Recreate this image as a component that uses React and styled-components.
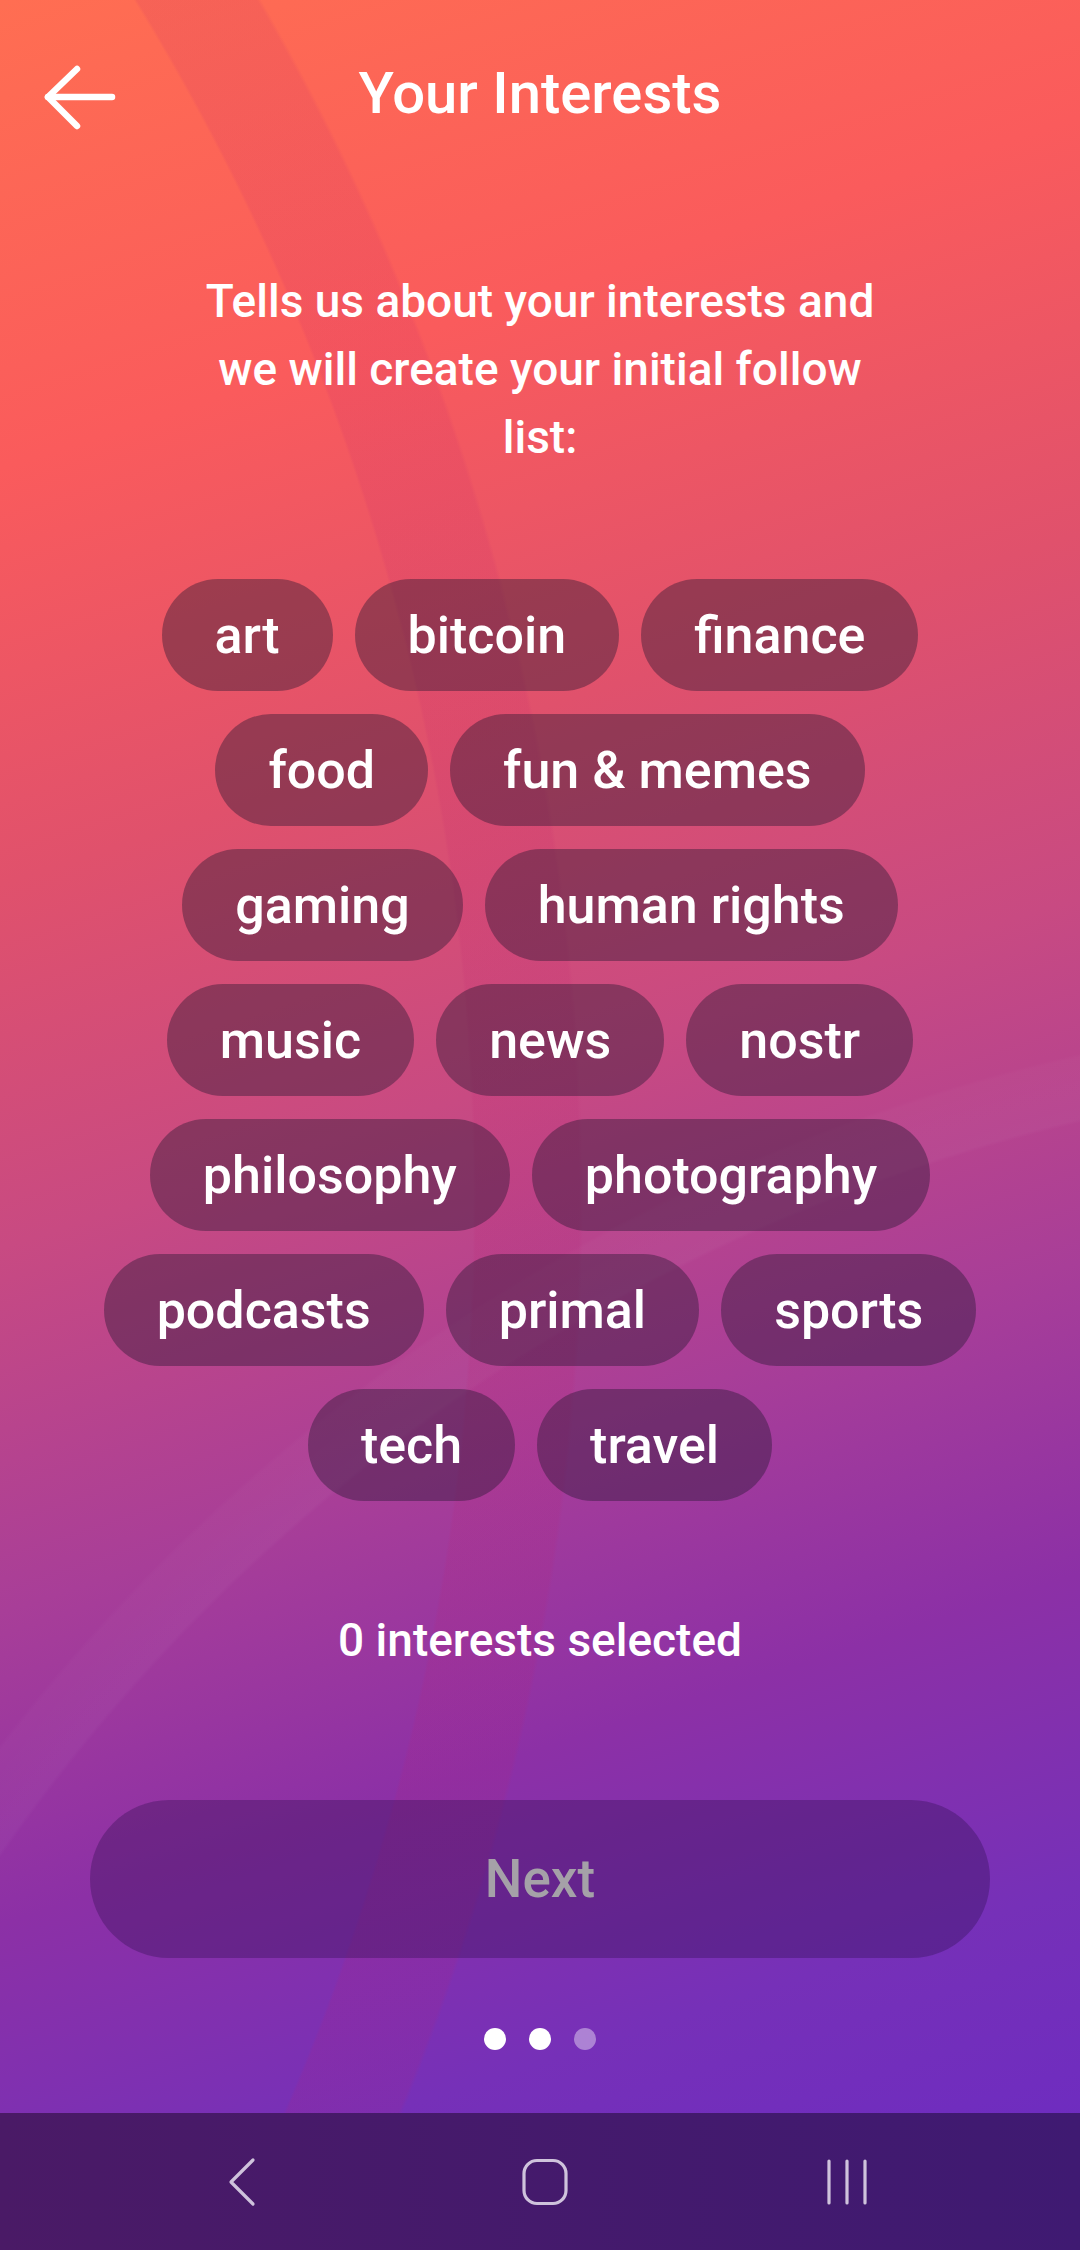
import React, { useState } from 'react'
import styled, { createGlobalStyle } from 'styled-components'

const GlobalStyle = createGlobalStyle`
    html, body {
        margin: 0;
        padding: 0;
    }
    body {
        font-family: Roboto, "Liberation Sans", sans-serif;
        -webkit-font-smoothing: antialiased;
    }
    * {
        box-sizing: border-box;
    }
`

const Screen = styled.div`
    width: 1080px;
    height: 2250px;
    display: flex;
    flex-direction: column;
    overflow: hidden;
    color: #ffffff;
    background:
        radial-gradient(circle at -1817px 1200px, transparent 2290px, rgba(190, 30, 110, 0.12) 2293px, rgba(190, 30, 110, 0.12) 2396px, transparent 2400px),
        radial-gradient(circle at 1500px 2900px, transparent 1826px, rgba(255, 255, 255, 0.03) 1830px, rgba(255, 255, 255, 0.02) 1890px, transparent 1894px),
        linear-gradient(162deg, #ff6e52 0%, #fa5b5c 18%, #e0516c 34%, #c84a82 48%, #a83e98 62%, #8c30a6 74%, #7630b8 86%, #6a2ac4 100%);
`

const Main = styled.main`
    flex: 1;
    display: flex;
    flex-direction: column;
    align-items: center;
`

const Header = styled.header`
    width: 100%;
    display: grid;
    grid-template-columns: 160px 1fr 160px;
    align-items: center;
    padding-top: 48px;
`

const BackButton = styled.button`
    width: 100px;
    height: 80px;
    margin-left: 38px;
    margin-top: 10px;
    padding: 0;
    border: none;
    background: none;
    display: flex;
    align-items: center;
    cursor: pointer;
`

const Title = styled.h1`
    margin: 0;
    text-align: center;
    font-size: 58px;
    line-height: 70px;
    font-weight: 500;
`

const Intro = styled.p`
    margin: 129px 0 0;
    width: 690px;
    text-align: center;
    font-size: 46px;
    line-height: 68px;
    font-weight: 500;
`

const Tags = styled.div`
    margin-top: 108px;
    width: 910px;
    display: flex;
    flex-wrap: wrap;
    justify-content: center;
    gap: 23px 22px;
`

const Tag = styled.button`
    height: 112px;
    padding: 0 53px;
    border: none;
    border-radius: 56px;
    background: ${p => p.$on ? 'rgba(255, 255, 255, 0.9)' : 'rgba(35, 22, 48, 0.4)'};
    color: ${p => p.$on ? '#5a1f7a' : '#ffffff'};
    font-family: Roboto, "Liberation Sans", sans-serif;
    font-size: 52px;
    font-weight: 500;
    cursor: pointer;
`

const Counter = styled.div`
    margin-top: 108px;
    font-size: 46px;
    line-height: 62px;
    font-weight: 500;
`

const NextButton = styled.button`
    margin-top: 129px;
    width: 900px;
    height: 158px;
    border: none;
    border-radius: 79px;
    background: rgba(40, 12, 70, 0.32);
    color: ${p => p.disabled ? '#a5a1a8' : '#ffffff'};
    font-family: Roboto, "Liberation Sans", sans-serif;
    font-size: 53px;
    font-weight: 500;
    cursor: pointer;
`

const Dots = styled.div`
    margin-top: 70px;
    display: flex;
    gap: 23px;
`

const Dot = styled.span`
    width: 22px;
    height: 22px;
    border-radius: 50%;
    background: ${p => p.$dim ? 'rgba(255, 255, 255, 0.4)' : '#ffffff'};
`

const NavBar = styled.nav`
    height: 137px;
    display: grid;
    grid-template-columns: repeat(3, 302px);
    justify-content: center;
    align-items: center;
    padding-left: 10px;
    background: linear-gradient(90deg, #4a1a66, #3f1a72);
`

const NavItem = styled.div`
    display: flex;
    justify-content: center;
`

const topics = [
    'art', 'bitcoin', 'finance', 'food', 'fun & memes', 'gaming', 'human rights',
    'music', 'news', 'nostr', 'philosophy', 'photography', 'podcasts', 'primal',
    'sports', 'tech', 'travel',
]

const App = () => {
    const [picked, setPicked] = useState([])

    const toggle = (t) => {
        setPicked(picked.includes(t) ? picked.filter(x => x !== t) : [...picked, t])
    }

    return (
        <Screen>
            <GlobalStyle />
            <Main>
                <Header>
                    <BackButton aria-label="back">
                        <svg width="80" height="80" viewBox="0 0 80 80" fill="none" stroke="#fff" strokeWidth="6.5" strokeLinecap="round" strokeLinejoin="round">
                            <path d="M10 39 H74" />
                            <path d="M39 11 L10 39 L39 68" />
                        </svg>
                    </BackButton>
                    <Title>Your Interests</Title>
                    <div />
                </Header>

                <Intro>Tells us about your interests and we will create your initial follow list:</Intro>

                <Tags>
                    {topics.map(t => (
                        <Tag key={t} $on={picked.includes(t)} onClick={() => toggle(t)}>{t}</Tag>
                    ))}
                </Tags>

                <Counter>{picked.length} interests selected</Counter>

                <NextButton disabled={picked.length === 0}>Next</NextButton>

                <Dots>
                    <Dot />
                    <Dot />
                    <Dot $dim />
                </Dots>
            </Main>

            <NavBar>
                <NavItem>
                    <svg width="40" height="52" viewBox="0 0 40 52" fill="none" stroke="#cfc3dc" strokeWidth="3.2" strokeLinecap="round" strokeLinejoin="round">
                        <path d="M30 4 L8 26 L30 48" />
                    </svg>
                </NavItem>
                <NavItem>
                    <svg width="48" height="48" viewBox="0 0 48 48" fill="none" stroke="#cfc3dc" strokeWidth="3.2">
                        <rect x="3" y="2.5" width="42" height="43" rx="13" />
                    </svg>
                </NavItem>
                <NavItem>
                    <svg width="46" height="48" viewBox="0 0 46 48" fill="none" stroke="#cfc3dc" strokeWidth="3.2" strokeLinecap="round">
                        <path d="M5 3 V45 M23 3 V45 M41 3 V45" />
                    </svg>
                </NavItem>
            </NavBar>
        </Screen>
    )
}

export default App
